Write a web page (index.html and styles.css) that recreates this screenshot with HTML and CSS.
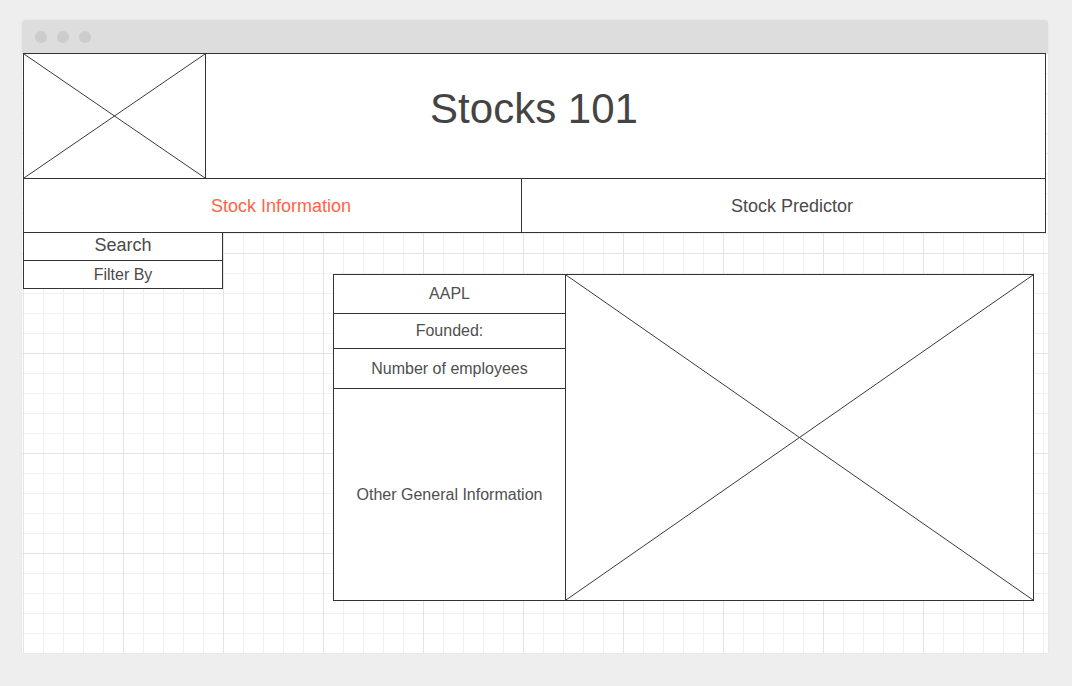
FILE: index.html
```html
<!DOCTYPE html>
<html>
<head>
<meta charset="utf-8">
<link rel="stylesheet" href="styles.css">
</head>
<body>
<div class="window">
  <div class="titlebar">
    <span class="dot"></span><span class="dot"></span><span class="dot"></span>
  </div>
  <div class="canvas">
    <div class="header">
      <div class="logo">
        <svg class="xbox" viewBox="0 0 100 100" preserveAspectRatio="none">
          <line x1="0" y1="0" x2="100" y2="100" vector-effect="non-scaling-stroke"/>
          <line x1="100" y1="0" x2="0" y2="100" vector-effect="non-scaling-stroke"/>
        </svg>
      </div>
      <h1 class="title">Stocks 101</h1>
    </div>
    <div class="nav">
      <div class="tab tab-active">Stock Information</div>
      <div class="tab tab-right">Stock Predictor</div>
    </div>
    <div class="body">
      <div class="sidebar">
        <div class="side-item side-search">Search</div>
        <div class="side-item side-filter">Filter By</div>
      </div>
      <div class="panel">
        <div class="info">
          <div class="row row-1">AAPL</div>
          <div class="row row-2">Founded:</div>
          <div class="row row-3">Number of employees</div>
          <div class="row row-4">Other General Information</div>
        </div>
        <div class="chart">
          <svg class="xbox" viewBox="0 0 100 100" preserveAspectRatio="none">
            <line x1="0" y1="0" x2="100" y2="100" vector-effect="non-scaling-stroke"/>
            <line x1="100" y1="0" x2="0" y2="100" vector-effect="non-scaling-stroke"/>
          </svg>
        </div>
      </div>
    </div>
  </div>
</div>
</body>
</html>
```
FILE: styles.css
```css
* { box-sizing: border-box; }
html, body { margin: 0; padding: 0; }
body {
  background: #eeeeee;
  font-family: "Liberation Sans", Arial, sans-serif;
  color: #444444;
  width: 1072px;
  height: 686px;
  overflow: hidden;
}
.window {
  margin: 20px 0 0 22px;
  width: 1026px;
  box-shadow: 0 0 2px rgba(0,0,0,0.08);
  border-radius: 4px 4px 0 0;
}
.titlebar {
  height: 33px;
  background: #dddddd;
  border-radius: 4px 4px 0 0;
  display: flex;
  align-items: center;
  gap: 10px;
  padding-left: 13px;
}
.dot {
  width: 12px;
  height: 12px;
  border-radius: 50%;
  background: #cccccc;
}
.canvas {
  height: 600px;
  padding-left: 1px;
  background-color: #ffffff;
  background-image:
    linear-gradient(to right, #e4e4e4 1px, transparent 1px),
    linear-gradient(to bottom, #e4e4e4 1px, transparent 1px),
    linear-gradient(to right, #f0f0f0 1px, transparent 1px),
    linear-gradient(to bottom, #f0f0f0 1px, transparent 1px);
  background-size: 100px 100px, 100px 100px, 20px 20px, 20px 20px;
  background-position: 1px 0, 1px 0, 1px 0, 1px 0;
}
.header {
  width: 1023px;
  height: 126px;
  border: 1px solid #333333;
  background: #ffffff;
  display: flex;
}
.logo {
  width: 182px;
  border-right: 1px solid #333333;
}
.xbox {
  display: block;
  width: 100%;
  height: 100%;
}
.xbox line {
  stroke: #3a3a3a;
  stroke-width: 1;
}
.title {
  flex: 1;
  margin: 0;
  font-weight: normal;
  font-size: 42px;
  line-height: 1;
  display: flex;
  align-items: center;
  justify-content: center;
  padding-right: 183px;
  padding-bottom: 15px;
  color: #444444;
}
.nav {
  width: 1023px;
  height: 54px;
  border: 1px solid #333333;
  border-top: none;
  background: #ffffff;
  display: flex;
}
.tab {
  display: flex;
  align-items: center;
  justify-content: center;
  font-size: 18px;
  padding-left: 17px;
  padding-top: 2px;
  color: #4a4a4a;
}
.tab-active {
  width: 498px;
  border-right: 1px solid #333333;
  color: #ff6347;
}
.tab-right {
  flex: 1;
}
.body {
  display: flex;
  align-items: flex-start;
}
.sidebar {
  width: 200px;
  border: 1px solid #333333;
  border-top: none;
  background: #ffffff;
}
.side-item {
  height: 28px;
  display: flex;
  align-items: center;
  justify-content: center;
  color: #4a4a4a;
}
.side-search {
  border-bottom: 1px solid #333333;
  font-size: 18px;
  padding-bottom: 2px;
}
.side-filter {
  height: 27px;
  font-size: 16px;
}
.panel {
  margin-left: 110px;
  margin-top: 41px;
  width: 701px;
  height: 327px;
  border: 1px solid #333333;
  background: #ffffff;
  display: flex;
}
.info {
  width: 232px;
  border-right: 1px solid #333333;
  display: flex;
  flex-direction: column;
}
.row {
  display: flex;
  align-items: center;
  justify-content: center;
  font-size: 16px;
  color: #4f4f4f;
  border-bottom: 1px solid #333333;
}
.row-1 { height: 39px; }
.row-2 { height: 35px; }
.row-3 { height: 40px; }
.row-4 { flex: 1; border-bottom: none; }
.chart {
  flex: 1;
}
```
